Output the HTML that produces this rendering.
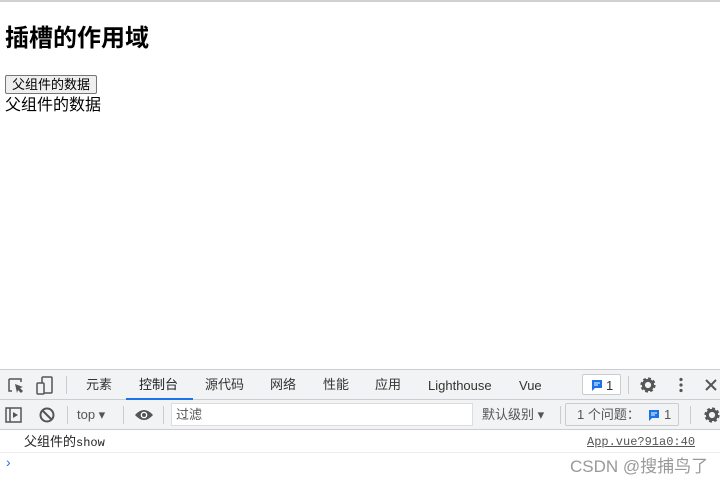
<!DOCTYPE html>
<html><head><meta charset="utf-8"><style>
*{box-sizing:border-box}
body{margin:0;width:720px;height:486px;overflow:hidden;background:#fff;font-family:"Liberation Sans","Noto Sans CJK SC",sans-serif;position:relative}
.top{position:absolute;left:0;top:0;width:720px;height:2px;background:#d0d0d0}
h1{position:absolute;left:5px;top:24px;margin:0;font-size:24px;font-weight:bold;line-height:30px}
button{position:absolute;left:5px;top:75px;height:19px;padding:0 6px;font-size:13px;font-family:inherit;border:1px solid #767676;background:#efefef;border-radius:2px;line-height:16px}
.txt{position:absolute;left:5px;top:96px;font-size:16px;line-height:20px}
.dt{position:absolute;left:0;top:369px;width:720px;height:117px;font-size:13px;color:#333}
.bar1{position:absolute;top:0;left:0;width:720px;height:31px;background:#f1f3f4;border-top:1px solid #cacdd1;border-bottom:1px solid #cacdd1}
.bar2{position:absolute;top:31px;left:0;width:720px;height:30px;background:#f1f3f4;border-bottom:1px solid #cacdd1}
.t{position:absolute;top:7px;font-size:13px;color:#333;line-height:16px;height:16px;white-space:nowrap}
.sep{position:absolute;width:1px;height:18px;background:#ccc}
.ic{position:absolute;color:#555}
</style></head><body>
<div class="top"></div>
<h1>插槽的作用域</h1>
<button>父组件的数据</button>
<div class="txt">父组件的数据</div>
<svg width="0" height="0" style="position:absolute"><defs><g id="gear"><circle cx="9" cy="9" r="6" fill="none" stroke="#555" stroke-width="3.2" stroke-dasharray="2.6 2.1"/><circle cx="9" cy="9" r="4.6" fill="none" stroke="#555" stroke-width="3"/></g></defs></svg>
<div class="dt">
 <div class="bar1">
  <svg class="ic" style="left:7px;top:7px" width="18" height="18" viewBox="0 0 18 18"><path d="M2 2h12v3M2 2v12h3" fill="none" stroke="#555" stroke-width="1.5"/><path d="M8 7l8 3-3 1 3 3-2 2-3-3-1 3z" fill="#555"/></svg>
  <svg class="ic" style="left:36px;top:6px" width="18" height="20" viewBox="0 0 18 20"><rect x="6" y="1" width="10" height="16" rx="1" fill="none" stroke="#555" stroke-width="1.5"/><rect x="1" y="7" width="7" height="11" rx="1" fill="#f1f3f4" stroke="#555" stroke-width="1.5"/></svg>
  <div class="sep" style="left:66px;top:6px"></div>
  <span class="t" style="left:86px">元素</span>
  <span class="t" style="left:139px;color:#202124">控制台</span>
  <div style="position:absolute;left:126px;top:28px;width:67px;height:2px;background:#1a73e8"></div>
  <span class="t" style="left:205px">源代码</span>
  <span class="t" style="left:270px">网络</span>
  <span class="t" style="left:323px">性能</span>
  <span class="t" style="left:375px">应用</span>
  <span class="t" style="left:428px;top:8px">Lighthouse</span>
  <span class="t" style="left:519px;top:8px">Vue</span>
  <div style="position:absolute;left:582px;top:4px;width:39px;height:21px;border:1px solid #ccc;border-radius:2px;background:#fff"></div>
  <svg style="position:absolute;left:591px;top:9px" width="12" height="12" viewBox="0 0 12 12"><path d="M1 1h10v8H4l-3 3z" fill="#1a73e8"/><path d="M3 4h6M3 6h4" stroke="#fff"/></svg>
  <span class="t" style="left:606px;top:8px">1</span>
  <div class="sep" style="left:628px;top:6px"></div>
  <svg style="position:absolute;left:639px;top:6px" width="18" height="18"><use href="#gear"/></svg>
  <svg style="position:absolute;left:677px;top:7px" width="8" height="16"><circle cx="4" cy="2.5" r="1.6" fill="#555"/><circle cx="4" cy="8" r="1.6" fill="#555"/><circle cx="4" cy="13.5" r="1.6" fill="#555"/></svg>
  <svg style="position:absolute;left:705px;top:9px" width="12" height="12"><path d="M1 1l10 10M11 1L1 11" stroke="#555" stroke-width="2"/></svg>
 </div>
 <div class="bar2">
  <svg class="ic" style="left:5px;top:6px" width="18" height="18" viewBox="0 0 18 18"><rect x="1" y="2" width="15" height="14" fill="none" stroke="#555" stroke-width="1.5"/><path d="M5 2v14" stroke="#555" stroke-width="1.5"/><path d="M8 6l5 3-5 3z" fill="#555"/></svg>
  <svg class="ic" style="left:38px;top:6px" width="18" height="18" viewBox="0 0 18 18"><circle cx="9" cy="9" r="6.5" fill="none" stroke="#555" stroke-width="2"/><path d="M4.5 4.5l9 9" stroke="#555" stroke-width="2"/></svg>
  <div class="sep" style="left:67px;top:6px"></div>
  <span class="t" style="left:77px;top:7px;color:#555">top ▾</span>
  <div class="sep" style="left:123px;top:6px"></div>
  <svg class="ic" style="left:134px;top:8px" width="20" height="14" viewBox="0 0 20 14"><path d="M1 7Q10 -3 19 7Q10 17 1 7z" fill="#555"/><circle cx="10" cy="7" r="3.3" fill="#fff"/><circle cx="10" cy="7" r="2" fill="#555"/></svg>
  <div class="sep" style="left:163px;top:6px"></div>
  <div style="position:absolute;left:171px;top:3px;width:302px;height:23px;background:#fff;border:1px solid #ddd"></div>
  <span class="t" style="left:176px;top:7px;color:#555">过滤</span>
  <span class="t" style="left:482px;top:7px;color:#555">默认级别 ▾</span>
  <div class="sep" style="left:560px;top:6px"></div>
  <div style="position:absolute;left:565px;top:3px;width:114px;height:23px;border:1px solid #ccc;border-radius:2px"></div>
  <span class="t" style="left:577px;top:7px;color:#555">1 个问题：</span>
  <svg style="position:absolute;left:648px;top:9px" width="12" height="12" viewBox="0 0 12 12"><path d="M1 1h10v8H4l-3 3z" fill="#1a73e8"/><path d="M3 4h6M3 6h4" stroke="#fff"/></svg>
  <span class="t" style="left:664px;top:7px;color:#555">1</span>
  <div class="sep" style="left:690px;top:6px"></div>
  <svg style="position:absolute;left:703px;top:6px" width="18" height="18"><use href="#gear"/></svg>
 </div>
 <div style="position:absolute;top:61px;left:0;width:720px;height:23px;border-bottom:1px solid #eee"></div>
 <span class="t" style="left:24px;top:65px;font-size:13px;color:#222">父组件的<span style="font-family:'Liberation Mono',monospace;font-size:12px">show</span></span>
 <span class="t" style="left:587px;top:65px;font-family:'Liberation Mono',monospace;font-size:12px;color:#555;text-decoration:underline">App.vue?91a0:40</span>
 <span class="t" style="left:6px;top:85px;color:#1a73e8;font-size:14px">›</span>
 <span class="t" style="left:570px;top:88px;font-size:17px;color:#999;line-height:20px;height:20px">CSDN @搜捕鸟了</span>
</div>
</body></html>
